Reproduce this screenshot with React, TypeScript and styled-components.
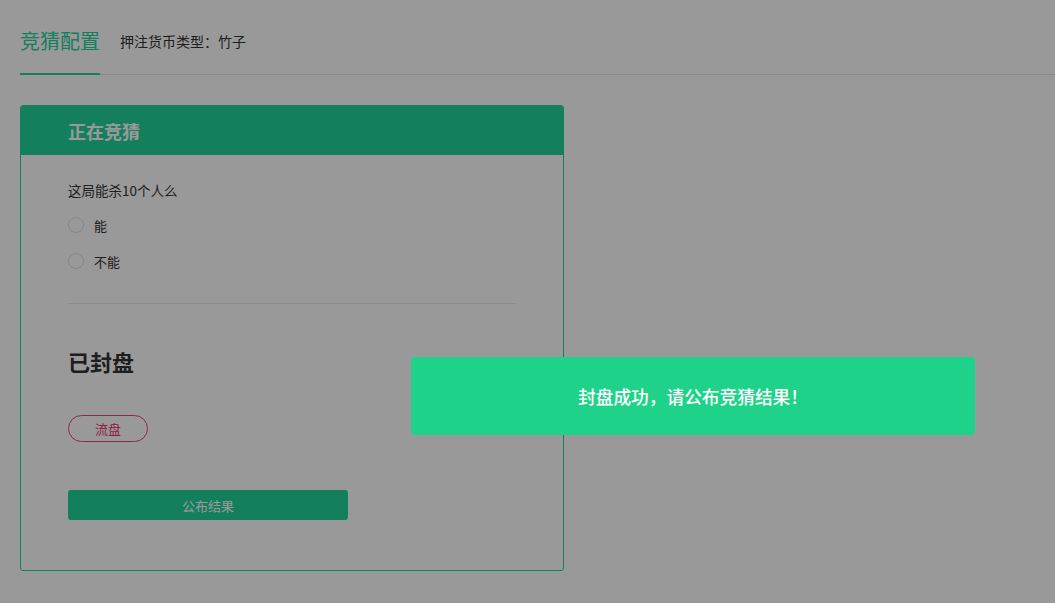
import styled, { createGlobalStyle } from "styled-components";

const GlobalStyle = createGlobalStyle`
    html, body {
        margin: 0;
        padding: 0;
        background: #ffffff;
        font-family: "Noto Sans CJK SC", "Noto Sans", "Liberation Sans", sans-serif;
        color: #333333;
    }
`;

const green = "#21d49c";

const Page = styled.div`
    min-height: 603px;
    padding: 0 0 0 20px;
    box-sizing: border-box;
`;

const TabBar = styled.div`
    display: flex;
    align-items: stretch;
    height: 75px;
    padding-top: 8px;
    box-sizing: border-box;
    border-bottom: 1px solid #e6e6e6;
`;

const Tab = styled.div<{ $active?: boolean }>`
    display: flex;
    align-items: center;
    font-size: 20px;
    color: ${({ $active }) => ($active ? green : "#333333")};
    border-bottom: 2px solid ${({ $active }) => ($active ? green : "transparent")};
    margin-bottom: -1px;
`;

const CurrencyNote = styled.div`
    display: flex;
    align-items: center;
    margin-left: 20px;
    font-size: 14px;
    color: #333333;
`;

const Card = styled.div`
    width: 544px;
    margin-top: 30px;
    border: 1px solid ${green};
    border-radius: 3px;
    box-sizing: border-box;
    overflow: hidden;
`;

const CardHeader = styled.div`
    height: 49px;
    background: ${green};
    display: flex;
    align-items: center;
    padding-left: 47px;
    font-size: 18px;
    font-weight: 700;
    color: #ffffff;
`;

const CardBody = styled.div`
    padding: 25px 47px 50px 47px;
`;

const Question = styled.p`
    margin: 0 0 16px 0;
    font-size: 13.5px;
    line-height: 20px;
`;

const Options = styled.div`
    display: flex;
    flex-direction: column;
    gap: 18px;
`;

const Option = styled.label`
    display: flex;
    align-items: center;
    height: 18px;
    font-size: 13px;
    color: #333333;
`;

const RadioCircle = styled.span`
    width: 14px;
    height: 14px;
    border: 1px solid #dcdfe6;
    border-radius: 50%;
    margin-right: 10px;
    background: #ffffff;
`;

const Divider = styled.hr`
    margin: 33px 0 0 0;
    border: none;
    border-top: 1px solid #e6e6e6;
`;

const Status = styled.h2`
    margin: 42px 0 0 0;
    font-size: 22px;
    line-height: 30px;
    font-weight: 700;
    color: #333333;
`;

const AbortButton = styled.button`
    display: block;
    margin-top: 39px;
    width: 80px;
    height: 27px;
    border: 1px solid #e6467a;
    border-radius: 14px;
    background: transparent;
    color: #f0326e;
    font-family: inherit;
    font-size: 13px;
    padding: 0;
`;

const PublishButton = styled.button`
    display: block;
    margin-top: 48px;
    width: 280px;
    height: 30px;
    border: none;
    border-radius: 3px;
    background: ${green};
    color: #ffffff;
    font-family: inherit;
    font-size: 13px;
    padding: 0;
`;

const Mask = styled.div`
    position: fixed;
    inset: 0;
    background: rgba(0, 0, 0, 0.4);
`;

const Toast = styled.div`
    position: fixed;
    left: 411px;
    top: 357px;
    width: 564px;
    height: 78px;
    border-radius: 4px;
    background: #1ed389;
    color: #ffffff;
    display: flex;
    align-items: center;
    justify-content: center;
    font-size: 17.7px;
    font-weight: 500;
`;

export default function App() {
    const options = ["能", "不能"];

    return (
        <>
            <GlobalStyle />
            <Page>
                <TabBar>
                    <Tab $active>竞猜配置</Tab>
                    <CurrencyNote>押注货币类型：竹子</CurrencyNote>
                </TabBar>
                <Card>
                    <CardHeader>正在竞猜</CardHeader>
                    <CardBody>
                        <Question>这局能杀10个人么</Question>
                        <Options>
                            {options.map(option => (
                                <Option key={option}>
                                    <RadioCircle />
                                    {option}
                                </Option>
                            ))}
                        </Options>
                        <Divider />
                        <Status>已封盘</Status>
                        <AbortButton>流盘</AbortButton>
                        <PublishButton>公布结果</PublishButton>
                    </CardBody>
                </Card>
            </Page>
            <Mask />
            <Toast>封盘成功，请公布竞猜结果！</Toast>
        </>
    );
}
